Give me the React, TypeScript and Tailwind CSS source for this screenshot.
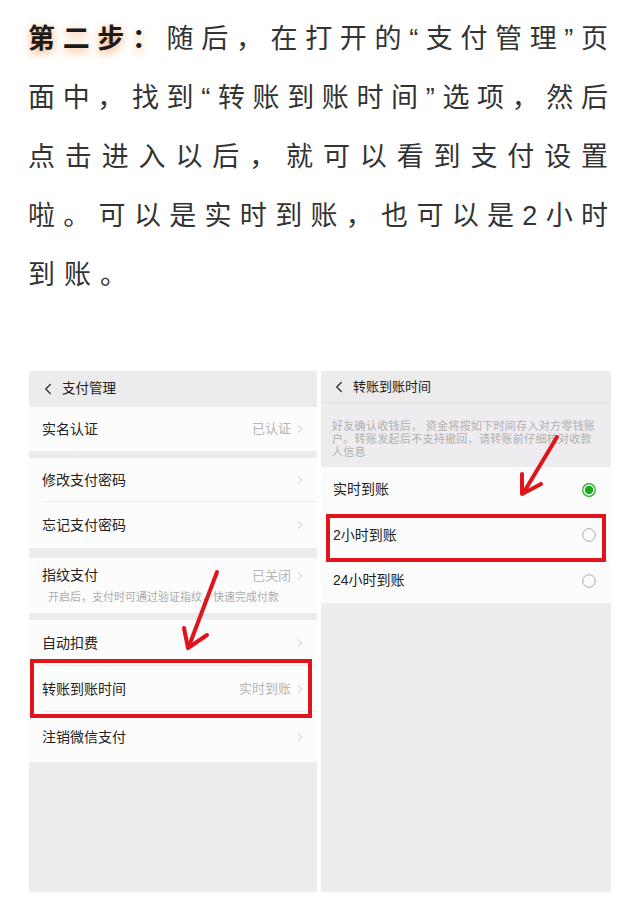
import { ChevronLeft, ChevronRight } from 'lucide-react';

const cjk = { fontFamily: '"Liberation Sans", "Noto Sans CJK SC", sans-serif' };

function Chevron() {
    return <ChevronRight className="w-[14px] h-[14px] text-[#b8b8b8]" strokeWidth={1.4} />;
}

function Row({ label, value, h, divider }: { label: string; value?: string; h: string; divider?: boolean }) {
    return (
        <div className={`relative flex items-center bg-[#fcfcfc] pl-[13px] pr-[10px] ${h}`}>
            <span className="flex-1 text-[14px] text-[#222]">{label}</span>
            {value && <span className="text-[13px] text-[#b5b5b5] mr-[2px]">{value}</span>}
            <Chevron />
            {divider && <div className="absolute bottom-0 left-[14px] right-0 h-px bg-[#ececec]" />}
        </div>
    );
}

function Radio({ on }: { on?: boolean }) {
    return (
        <svg width="16" height="16" viewBox="0 0 16 16">
            {on ? (
                <>
                    <circle cx="8" cy="8" r="6.3" fill="none" stroke="#1aad19" strokeWidth="1.2" />
                    <circle cx="8" cy="8" r="4.2" fill="#1aad19" />
                </>
            ) : (
                <circle cx="8" cy="8" r="6.3" fill="none" stroke="#a9a9a9" strokeWidth="1" />
            )}
        </svg>
    );
}

function Option({ label, on, h, boxed }: { label: string; on?: boolean; h: string; boxed?: boolean }) {
    return (
        <div className={`relative flex items-center bg-[#fcfcfc] pl-[12px] pr-[14px] ${h}`}>
            <span className="flex-1 text-[14px] text-[#222]">{label}</span>
            <Radio on={on} />
            {boxed && (
                <div className="absolute z-10 top-[2px] -bottom-[4px] left-[5px] right-[5px] border-[4px] border-[#e0141b]" />
            )}
        </div>
    );
}

export default function App() {
    const line = 'text-justify [text-align-last:justify]';
    return (
        <div className="relative w-[640px] h-[915px] bg-white overflow-hidden" style={cjk}>
            <div className="px-[28px] pt-[10px] text-[27px] leading-[59px] text-[#333] tracking-[4px]">
                <div className={line}>
                    <span className="font-bold text-[#1a1a1a] [text-shadow:0_3px_9px_rgba(246,140,60,0.8)]">第二步：</span>
                    随后，在打开的“支付管理”页
                </div>
                <div className={line}>面中，找到“转账到账时间”选项，然后</div>
                <div className={line}>点击进入以后，就可以看到支付设置</div>
                <div className={line}>啦。可以是实时到账，也可以是2小时</div>
                <div className="tracking-[9px]">到账。</div>
            </div>

            <div className="mt-[66px] flex gap-[4px] pl-[29px] h-[521px]">
                {/* 支付管理 */}
                <div className="w-[288px] flex flex-col bg-[#edebee]">
                    <div className="h-[36px] flex items-center gap-[5px] pl-[10px] bg-[#ececec]">
                        <ChevronLeft className="w-[18px] h-[18px] text-[#333]" strokeWidth={1.8} />
                        <span className="text-[13.5px] text-[#222]">支付管理</span>
                    </div>
                    <Row label="实名认证" value="已认证" h="h-[44px]" />
                    <div className="h-[7px]" />
                    <Row label="修改支付密码" h="h-[44px]" divider />
                    <Row label="忘记支付密码" h="h-[46px]" />
                    <div className="h-[10px]" />
                    <div className="h-[55px] flex flex-col justify-center bg-[#fcfcfc] pl-[13px] pr-[10px]">
                        <div className="flex items-center">
                            <span className="flex-1 text-[14px] text-[#222]">指纹支付</span>
                            <span className="text-[13px] text-[#b5b5b5] mr-[2px]">已关闭</span>
                            <Chevron />
                        </div>
                        <div className="mt-[3px] pl-[6px] text-[11px] text-[#ababab]">开启后，支付时可通过验证指纹，快速完成付款</div>
                    </div>
                    <div className="h-[7px]" />
                    <Row label="自动扣费" h="h-[46px]" divider />
                    <div className="relative">
                        <Row label="转账到账时间" value="实时到账" h="h-[46px]" divider />
                        <div className="absolute z-10 -top-[7px] -bottom-[6px] left-[1px] right-[5px] border-[4px] border-[#e0141b]" />
                    </div>
                    <Row label="注销微信支付" h="h-[50px]" />
                </div>

                {/* 转账到账时间 */}
                <div className="w-[290px] flex flex-col bg-[#eeecef]">
                    <div className="h-[32px] flex items-center gap-[5px] pl-[9px] bg-[#ececec] border-b border-[#e2e2e2]">
                        <ChevronLeft className="w-[18px] h-[18px] text-[#333]" strokeWidth={1.8} />
                        <span className="text-[13px] text-[#222]">转账到账时间</span>
                    </div>
                    <div className="h-[64px] pt-[17px] pl-[11px] pr-[8px] text-[11px] leading-[13px] text-[#b0b0b0] tracking-[0.3px]">
                        好友确认收钱后， 资金将按如下时间存入对方零钱账户。转账发起后不支持撤回，请转账前仔细核对收款人信息
                    </div>
                    <Option label="实时到账" on h="h-[45px]" />
                    <Option label="2小时到账" h="h-[46px]" boxed />
                    <Option label="24小时到账" h="h-[45px]" />
                </div>
            </div>

            <svg className="absolute inset-0 z-20 pointer-events-none" width="640" height="915">
                <g stroke="#e0141b" strokeWidth="4" strokeLinecap="round" strokeLinejoin="round" fill="none">
                    <line x1="217" y1="572" x2="189" y2="646" />
                    <polyline points="184,628 188,648 207,635" />
                    <line x1="557" y1="437" x2="524" y2="492" />
                    <polyline points="522,474 522,494 541,484" />
                </g>
            </svg>
        </div>
    );
}
